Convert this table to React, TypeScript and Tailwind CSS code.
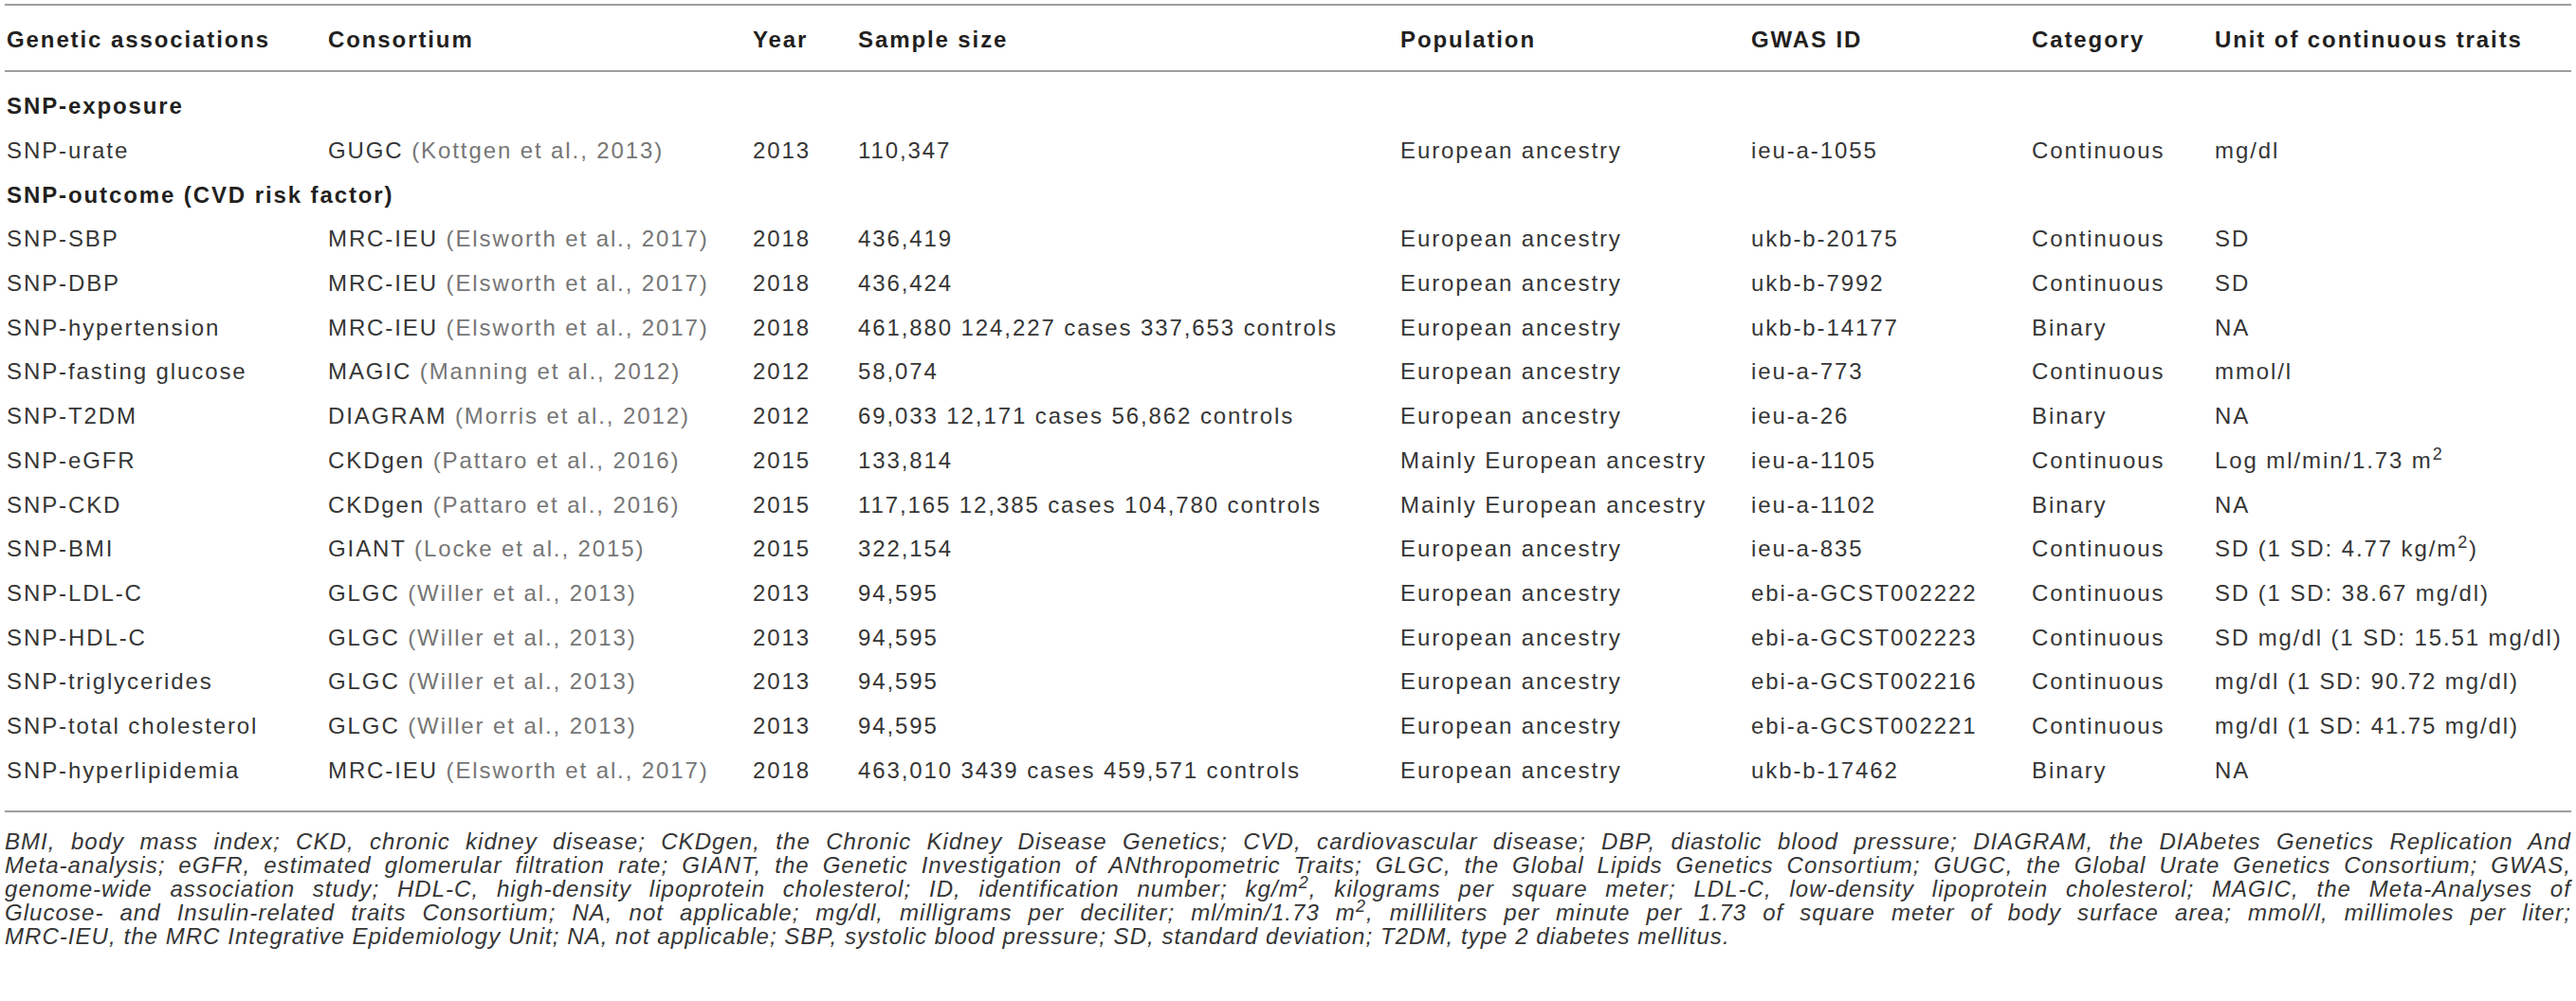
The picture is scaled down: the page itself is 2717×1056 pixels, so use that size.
import React from "react";

type Row = {
  assoc: string;
  consortium: string;
  cite: string;
  year: string;
  sample: string;
  population: string;
  gwas: string;
  category: string;
  unit: React.ReactNode;
};

const exposure: Row[] = [
  {
    assoc: "SNP-urate",
    consortium: "GUGC",
    cite: "Kottgen et al., 2013",
    year: "2013",
    sample: "110,347",
    population: "European ancestry",
    gwas: "ieu-a-1055",
    category: "Continuous",
    unit: "mg/dl",
  },
];

const outcome: Row[] = [
  { assoc: "SNP-SBP", consortium: "MRC-IEU", cite: "Elsworth et al., 2017", year: "2018", sample: "436,419", population: "European ancestry", gwas: "ukb-b-20175", category: "Continuous", unit: "SD" },
  { assoc: "SNP-DBP", consortium: "MRC-IEU", cite: "Elsworth et al., 2017", year: "2018", sample: "436,424", population: "European ancestry", gwas: "ukb-b-7992", category: "Continuous", unit: "SD" },
  { assoc: "SNP-hypertension", consortium: "MRC-IEU", cite: "Elsworth et al., 2017", year: "2018", sample: "461,880 124,227 cases 337,653 controls", population: "European ancestry", gwas: "ukb-b-14177", category: "Binary", unit: "NA" },
  { assoc: "SNP-fasting glucose", consortium: "MAGIC", cite: "Manning et al., 2012", year: "2012", sample: "58,074", population: "European ancestry", gwas: "ieu-a-773", category: "Continuous", unit: "mmol/l" },
  { assoc: "SNP-T2DM", consortium: "DIAGRAM", cite: "Morris et al., 2012", year: "2012", sample: "69,033 12,171 cases 56,862 controls", population: "European ancestry", gwas: "ieu-a-26", category: "Binary", unit: "NA" },
  {
    assoc: "SNP-eGFR", consortium: "CKDgen", cite: "Pattaro et al., 2016", year: "2015", sample: "133,814", population: "Mainly European ancestry", gwas: "ieu-a-1105", category: "Continuous",
    unit: (
      <>
        Log ml/min/1.73 m<sup>2</sup>
      </>
    ),
  },
  { assoc: "SNP-CKD", consortium: "CKDgen", cite: "Pattaro et al., 2016", year: "2015", sample: "117,165 12,385 cases 104,780 controls", population: "Mainly European ancestry", gwas: "ieu-a-1102", category: "Binary", unit: "NA" },
  {
    assoc: "SNP-BMI", consortium: "GIANT", cite: "Locke et al., 2015", year: "2015", sample: "322,154", population: "European ancestry", gwas: "ieu-a-835", category: "Continuous",
    unit: (
      <>
        SD (1 SD: 4.77 kg/m<sup>2</sup>)
      </>
    ),
  },
  { assoc: "SNP-LDL-C", consortium: "GLGC", cite: "Willer et al., 2013", year: "2013", sample: "94,595", population: "European ancestry", gwas: "ebi-a-GCST002222", category: "Continuous", unit: "SD (1 SD: 38.67 mg/dl)" },
  { assoc: "SNP-HDL-C", consortium: "GLGC", cite: "Willer et al., 2013", year: "2013", sample: "94,595", population: "European ancestry", gwas: "ebi-a-GCST002223", category: "Continuous", unit: "SD mg/dl (1 SD: 15.51 mg/dl)" },
  { assoc: "SNP-triglycerides", consortium: "GLGC", cite: "Willer et al., 2013", year: "2013", sample: "94,595", population: "European ancestry", gwas: "ebi-a-GCST002216", category: "Continuous", unit: "mg/dl (1 SD: 90.72 mg/dl)" },
  { assoc: "SNP-total cholesterol", consortium: "GLGC", cite: "Willer et al., 2013", year: "2013", sample: "94,595", population: "European ancestry", gwas: "ebi-a-GCST002221", category: "Continuous", unit: "mg/dl (1 SD: 41.75 mg/dl)" },
  { assoc: "SNP-hyperlipidemia", consortium: "MRC-IEU", cite: "Elsworth et al., 2017", year: "2018", sample: "463,010 3439 cases 459,571 controls", population: "European ancestry", gwas: "ukb-b-17462", category: "Binary", unit: "NA" },
];

const cols =
  "grid grid-cols-[339px_448px_111px_572px_370px_296px_193px_1fr] pl-[2px]";

const DataRow = ({ r }: { r: Row }) => (
  <div className={`${cols} h-[46.7px] items-center whitespace-nowrap`}>
    <div>{r.assoc}</div>
    <div>
      {r.consortium} <span className="text-[#767676]">({r.cite})</span>
    </div>
    <div>{r.year}</div>
    <div>{r.sample}</div>
    <div>{r.population}</div>
    <div>{r.gwas}</div>
    <div>{r.category}</div>
    <div>{r.unit}</div>
  </div>
);

const SectionRow = ({ label }: { label: string }) => (
  <div className="flex h-[46.7px] items-center pl-[2px] font-bold text-[#231f20]">{label}</div>
);

const App = () => {
  return (
    <div className="w-[2717px] h-[1056px] bg-white px-[5px] pt-[4px] font-['Liberation_Sans',Arial,sans-serif] text-[24px] tracking-[1.9px] text-[#363636] overflow-hidden">
      {/* Table */}
      <div className="border-y-2 border-[#9d9d9d]">
        <div className={`${cols} h-[70px] items-center pt-[4px] font-bold text-[#231f20] whitespace-nowrap border-b-2 border-[#9d9d9d]`}>
          <div>Genetic associations</div>
          <div>Consortium</div>
          <div>Year</div>
          <div>Sample size</div>
          <div>Population</div>
          <div>GWAS ID</div>
          <div>Category</div>
          <div>Unit of continuous traits</div>
        </div>

        <div className="pt-[13px] pb-[19px]">
          <SectionRow label="SNP-exposure" />
          {exposure.map((r) => (
            <DataRow key={r.assoc} r={r} />
          ))}
          <SectionRow label="SNP-outcome (CVD risk factor)" />
          {outcome.map((r) => (
            <DataRow key={r.assoc} r={r} />
          ))}
        </div>
      </div>

      {/* Footnote */}
      <div className="pt-[18px] italic text-[#363636] text-[24px] leading-[25px] tracking-[1.05px]">
        <div className="text-justify [text-align-last:justify]">
          BMI, body mass index; CKD, chronic kidney disease; CKDgen, the Chronic Kidney Disease Genetics; CVD, cardiovascular disease; DBP, diastolic blood pressure; DIAGRAM, the DIAbetes Genetics Replication And
        </div>
        <div className="text-justify [text-align-last:justify]">
          Meta-analysis; eGFR, estimated glomerular filtration rate; GIANT, the Genetic Investigation of ANthropometric Traits; GLGC, the Global Lipids Genetics Consortium; GUGC, the Global Urate Genetics Consortium; GWAS,
        </div>
        <div className="text-justify [text-align-last:justify]">
          genome-wide association study; HDL-C, high-density lipoprotein cholesterol; ID, identification number; kg/m<sup>2</sup>, kilograms per square meter; LDL-C, low-density lipoprotein cholesterol; MAGIC, the Meta-Analyses of
        </div>
        <div className="text-justify [text-align-last:justify]">
          Glucose- and Insulin-related traits Consortium; NA, not applicable; mg/dl, milligrams per deciliter; ml/min/1.73 m<sup>2</sup>, milliliters per minute per 1.73 of square meter of body surface area; mmol/l, millimoles per liter;
        </div>
        <div>
          MRC-IEU, the MRC Integrative Epidemiology Unit; NA, not applicable; SBP, systolic blood pressure; SD, standard deviation; T2DM, type 2 diabetes mellitus.
        </div>
      </div>
    </div>
  );
};

export default App;
